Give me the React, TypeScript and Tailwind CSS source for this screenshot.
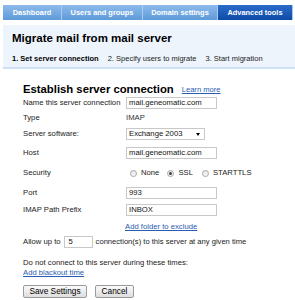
import React from "react";

const Radio = ({ checked }: { checked?: boolean }) => (
  <span className="relative inline-block w-[7px] h-[7px] rounded-full border border-[#a8a8a8] bg-gradient-to-b from-[#e4e4e4] to-[#fafafa]">
    {checked && (
      <span className="absolute left-[1px] top-[1px] w-[3px] h-[3px] rounded-full bg-[#404040]" />
    )}
  </span>
);

export default function App() {
  const tabs = [
    { label: "Dashboard", w: "w-[59px]", active: false },
    { label: "Users and groups", w: "w-[81px]", active: false },
    { label: "Domain settings", w: "w-[75px]", active: false },
    { label: "Advanced tools", w: "w-[75px]", active: true },
  ];
  return (
    <div className="w-[295px] h-[300px] bg-white overflow-hidden font-['Liberation_Sans',Arial,sans-serif] text-[#222] text-[7.7px] leading-none">
      <div className="flex pt-[5px] pl-[3px] h-[20px] box-content">
        {tabs.map((t) => (
          <div
            key={t.label}
            className={`${t.w} h-[15px] flex items-center justify-center font-bold text-[7.4px] text-white border-r border-[#a9c9ee] ${
              t.active
                ? "bg-gradient-to-b from-[#2a6ccb] to-[#0f4ba8]"
                : "bg-gradient-to-b from-[#8dbbec] to-[#5e9ad9]"
            }`}
          >
            {t.label}
          </div>
        ))}
      </div>
      <div className="ml-[3px] h-[44px] bg-[#eef4fc] border-b-2 border-[#cfdff4] pl-[9px]">
        <div className="pt-[6px] h-[20px] text-[11.5px] font-bold text-black leading-[14px]">
          Migrate mail from mail server
        </div>
        <div className="mt-[9px] flex items-center h-[10px] text-[7.5px] text-[#222]">
          <span className="font-bold text-black">1. Set server connection</span>
          <span className="ml-[9px]">2. Specify users to migrate</span>
          <span className="ml-[9px]">3. Start migration</span>
        </div>
      </div>
      <div className="pl-[23px]">
        <div className="mt-[14px] h-[14px] flex items-center">
          <span className="text-[11.3px] font-bold text-black">Establish server connection</span>
          <a className="ml-[8px] text-[7.6px] text-[#2a5db0] underline">Learn more</a>
        </div>
        <div className="h-[12px] flex items-center">
          <span className="w-[103px]">Name this server connection</span>
          <div className="w-[91px] h-[12px] border border-[#c8c8c8] flex items-center pl-[2px] text-[#111]">mail.geneomatic.com</div>
        </div>
        <div className="mt-[3px] h-[12px] flex items-center">
          <span className="w-[103px]">Type</span>
          <span className="text-[#333]">IMAP</span>
        </div>
        <div className="mt-[4px] h-[12px] flex items-center">
          <span className="w-[103px]">Server software:</span>
          <div className="w-[79px] h-[12px] border border-[#c8c8c8] flex items-center pl-[2px] pr-[4px] justify-between text-[#111]">
            <span>Exchange 2003</span>
            <span className="w-0 h-0 border-l-[2.5px] border-r-[2.5px] border-t-[3px] border-l-transparent border-r-transparent border-t-black" />
          </div>
        </div>
        <div className="mt-[7px] h-[12px] flex items-center">
          <span className="w-[103px]">Host</span>
          <div className="w-[91px] h-[12px] border border-[#c8c8c8] flex items-center pl-[2px] text-[#111]">mail.geneomatic.com</div>
        </div>
        <div className="mt-[8px] h-[12px] flex items-center">
          <span className="w-[107px]">Security</span>
          <Radio />
          <span className="ml-[4px]">None</span>
          <span className="ml-[8px] flex items-center"><Radio checked /></span>
          <span className="ml-[4px]">SSL</span>
          <span className="ml-[9px] flex items-center"><Radio /></span>
          <span className="ml-[4px]">STARTTLS</span>
        </div>
        <div className="mt-[8px] h-[12px] flex items-center">
          <span className="w-[103px]">Port</span>
          <div className="w-[91px] h-[12px] border border-[#c8c8c8] flex items-center pl-[2px] text-[#111]">993</div>
        </div>
        <div className="mt-[5px] h-[12px] flex items-center">
          <span className="w-[103px]">IMAP Path Prefix</span>
          <div className="w-[91px] h-[12px] border border-[#c8c8c8] flex items-center pl-[2px] text-[#111]">INBOX</div>
        </div>
        <div className="mt-[5px] h-[12px] flex items-center">
          <span className="w-[102px]" />
          <a className="text-[#2a5db0] underline">Add folder to exclude</a>
        </div>
        <div className="mt-[3px] h-[12px] flex items-center">
          <span>Allow up to</span>
          <div className="ml-[3px] w-[29px] h-[12px] border border-[#c8c8c8] flex items-center pl-[4px] text-[#111]">5</div>
          <span className="ml-[3px] text-[7.6px]">connection(s) to this server at any given time</span>
        </div>
        <div className="mt-[10px] h-[10px] flex items-center">
          Do not connect to this server during these times:
        </div>
        <div className="h-[10px] flex items-center">
          <a className="text-[#2a5db0] underline">Add blackout time</a>
        </div>
        <div className="mt-[7px] flex gap-[8px]">
          <button className="w-[64px] h-[13px] border border-[#9a9a9a] rounded-[2px] bg-gradient-to-b from-[#fbfbfb] to-[#dedede] text-[8.3px] text-black flex items-center justify-center">
            Save Settings
          </button>
          <button className="w-[39px] h-[13px] border border-[#9a9a9a] rounded-[2px] bg-gradient-to-b from-[#fbfbfb] to-[#dedede] text-[8.3px] text-black flex items-center justify-center">
            Cancel
          </button>
        </div>
      </div>
    </div>
  );
}
